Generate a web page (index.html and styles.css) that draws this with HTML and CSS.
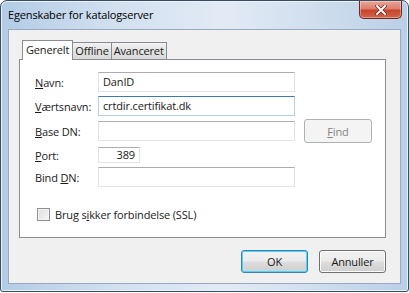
FILE: index.html
```html
<!DOCTYPE html>
<html lang="da">

<head>
    <meta charset="UTF-8">
    <meta name="viewport" content="width=device-width, initial-scale=1.0">
    <title>Egenskaber for katalogserver</title>
    <link rel="stylesheet" href="styles.css">
</head>

<body>
    <div class="window">
        <div class="titlebar">
            <span class="title">Egenskaber for katalogserver</span>
            <button type="button" class="close" aria-label="Luk">
                <svg width="12" height="10" viewBox="0 0 12 10">
                    <path d="M2 1 L10 9 M10 1 L2 9" stroke="#5a1b12" stroke-width="3.2" stroke-linecap="square" />
                    <path d="M2 1 L10 9 M10 1 L2 9" stroke="#fff" stroke-width="2" stroke-linecap="square" />
                </svg>
            </button>
        </div>
        <div class="client">
            <div class="tabs">
                <div class="tab selected">Generelt</div>
                <div class="tab">Offline</div>
                <div class="tab">Avanceret</div>
            </div>
            <div class="panel">
                <div class="row row1">
                    <label class="label"><u>N</u>avn:</label>
                    <div class="field">DanID</div>
                </div>
                <div class="row row2">
                    <label class="label"><u>V</u>ærtsnavn:</label>
                    <div class="field focused">crtdir.certifikat.dk</div>
                </div>
                <div class="row row3">
                    <label class="label"><u>B</u>ase DN:</label>
                    <div class="field"></div>
                    <button type="button" class="btn disabled"><u>F</u>ind</button>
                </div>
                <div class="row row4">
                    <label class="label"><u>P</u>ort:</label>
                    <div class="field port">389</div>
                </div>
                <div class="row row5">
                    <label class="label">Bind <u>D</u>N:</label>
                    <div class="field"></div>
                </div>
                <div class="check-row">
                    <span class="checkbox"></span>
                    <span>Brug s<u>i</u>kker forbindelse (SSL)</span>
                </div>
            </div>
            <div class="buttons">
                <button type="button" class="btn default">OK</button>
                <button type="button" class="btn">Annuller</button>
            </div>
        </div>
    </div>
</body>

</html>
```

FILE: styles.css
```css
body {
    margin: 0;
    background-color: #ffffff;
    font-family: "Open Sans", "Noto Sans", sans-serif;
    font-size: 11px;
    letter-spacing: -0.15px;
    color: #1a1a1a;
}

.window {
    width: 409px;
    height: 292px;
    box-sizing: border-box;
    border: 1px solid #3b4b60;
    border-radius: 7px 7px 3px 3px;
    padding: 0 7px 7px 7px;
    display: flex;
    flex-direction: column;
    background: linear-gradient(90deg, #b3cbe6 0%, #cfdeef 25%, #e2ebf5 55%, #cddced 80%, #b9cfe8 100%);
    box-shadow: inset 0 0 0 1px #e9f1fa;
}

.titlebar {
    height: 28px;
    display: flex;
    align-items: flex-start;
}

.title {
    margin-top: 6px;
    line-height: 16px;
    color: #000;
}

.close {
    margin-left: auto;
    margin-right: -1px;
    width: 43px;
    height: 18px;
    padding: 0;
    border: 1px solid #6b2a20;
    border-top: none;
    border-radius: 0 0 5px 5px;
    background: linear-gradient(#e9a698 0%, #dc7e6c 45%, #c8442c 55%, #d2654b 100%);
    box-shadow: inset 0 0 0 1px rgba(255, 255, 255, 0.35);
    display: flex;
    align-items: center;
    justify-content: center;
}

.client {
    flex: 1;
    background-color: #f0f0f0;
    border: 1px solid #97aac1;
    padding: 10px 14px 0 10px;
    display: flex;
    flex-direction: column;
}

.tabs {
    display: flex;
    height: 19px;
    align-items: flex-end;
    padding-left: 4px;
    position: relative;
    z-index: 1;
}

.tab {
    height: 17px;
    box-sizing: border-box;
    border: 1px solid #898c95;
    border-bottom: none;
    border-left: none;
    padding: 0 2px;
    line-height: 16px;
    background: linear-gradient(#f2f2f2, #e3e3e3 50%, #d9d9d9);
}

.tab.selected {
    height: 20px;
    margin-bottom: -1px;
    margin-left: -1px;
    border-left: 1px solid #898c95;
    background: #ffffff;
    padding: 0 3px;
    line-height: 18px;
}

.panel {
    height: 179px;
    box-sizing: border-box;
    background: #ffffff;
    border: 1px solid #898c95;
    padding: 11px 0 0 15px;
    display: flex;
    flex-direction: column;
}

.row {
    display: flex;
    align-items: center;
    height: 20px;
}

.row1 { margin-top: 1px; }
.row2 { margin-top: 4px; }
.row3 { margin-top: 5px; }
.row4 { margin-top: 6px; height: 16px; }
.row5 { margin-top: 4px; }

.label {
    width: 63px;
    flex-shrink: 0;
}

.field {
    width: 197px;
    height: 20px;
    box-sizing: border-box;
    border: 1px solid #e2e3ea;
    border-top-color: #abadb3;
    padding: 0 4px;
    line-height: 18px;
    background: #fff;
}

.field.focused {
    border-color: #b5cfe7;
    border-top-color: #3d7bad;
}

.field.port {
    width: 42px;
    height: 16px;
    line-height: 14px;
    text-align: right;
}

.btn {
    font-family: inherit;
    font-size: inherit;
    letter-spacing: inherit;
    width: 68px;
    height: 24px;
    padding: 0;
    border: 1px solid #707070;
    border-radius: 3px;
    background: linear-gradient(#f2f2f2 0%, #ebebeb 48%, #dddddd 52%, #cfcfcf 100%);
    box-shadow: inset 0 0 0 1px #fcfcfc;
    color: #1a1a1a;
}

.btn.disabled {
    margin-left: 9px;
    border-color: #adb2b5;
    background: #f4f4f4;
    box-shadow: none;
    color: #838383;
}

.check-row {
    display: flex;
    align-items: center;
    margin-top: 20px;
    margin-left: 2px;
    gap: 5px;
    height: 15px;
}

.checkbox {
    width: 13px;
    height: 13px;
    box-sizing: border-box;
    border: 1px solid #8e8f8f;
    background: linear-gradient(135deg, #dcdcdc, #f6f6f6);
    box-shadow: inset 0 0 0 1px #f4f4f4;
}

.buttons {
    display: flex;
    justify-content: flex-end;
    gap: 11px;
    margin-top: 12px;
}

.buttons .btn {
    width: 67px;
    height: 23px;
}

.btn.default {
    border-color: #3c7fb1;
    box-shadow: inset 0 0 0 1px #48d8fb;
}
```
